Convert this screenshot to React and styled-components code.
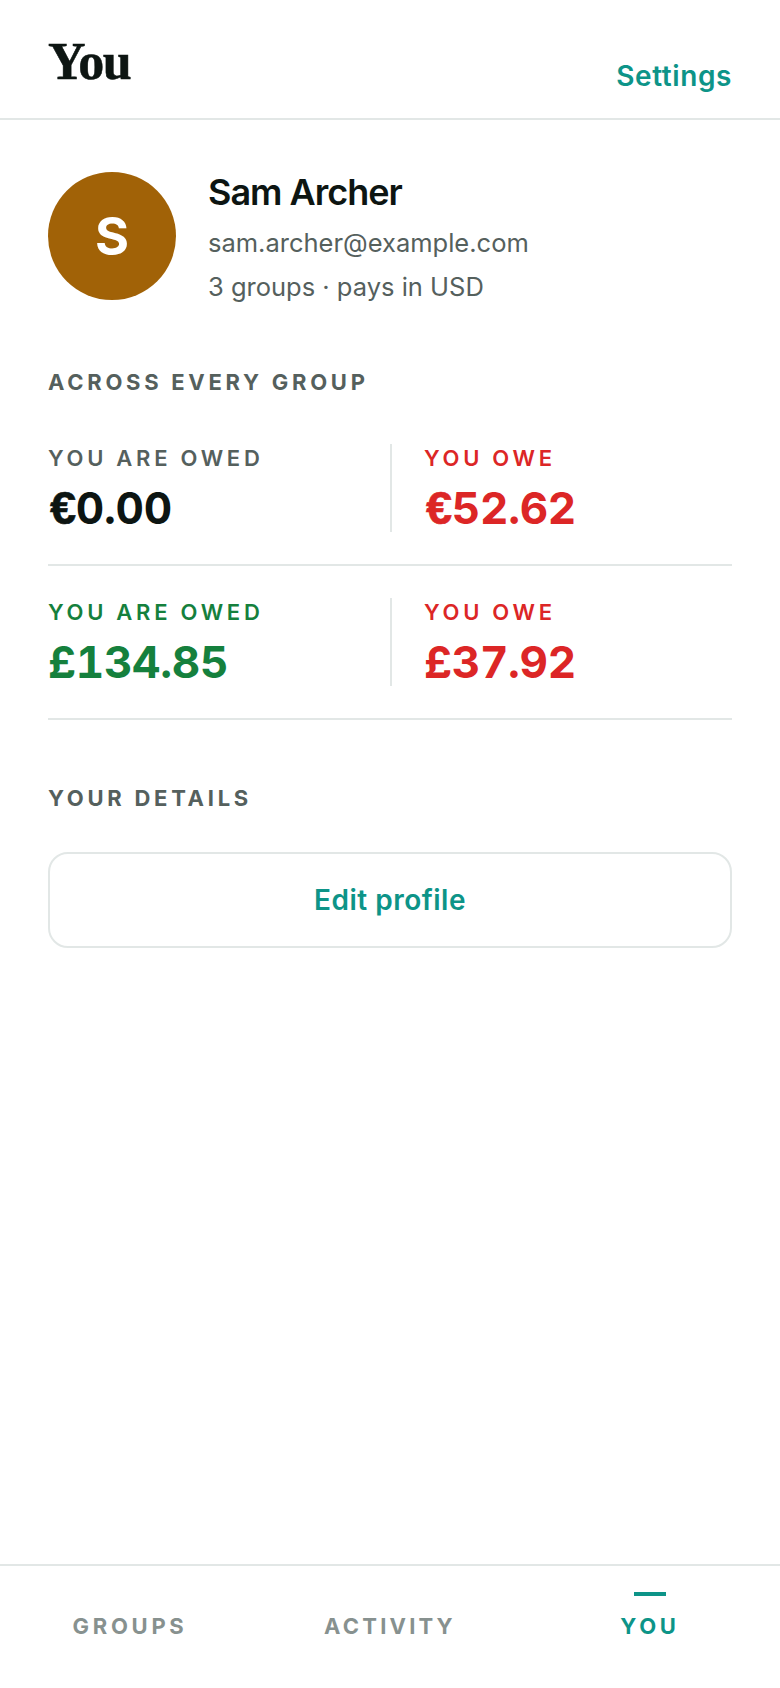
import React from "react";
import styled, { createGlobalStyle } from "styled-components";

const Global = createGlobalStyle`
  html, body { margin: 0; padding: 0; background: #fff; }
  body { font-family: Inter, "Liberation Sans", sans-serif; color: #0d1512; font-kerning: normal; }
`;

const Page = styled.div`
  width: 780px;
  height: 1688px;
  display: flex;
  flex-direction: column;
  overflow: hidden;
`;

const Header = styled.header`
  height: 120px;
  box-sizing: border-box;
  border-bottom: 2px solid #e2e7e6;
  padding: 0 48px 24px;
  display: flex;
  justify-content: space-between;
  align-items: flex-end;
`;

const Title = styled.h1`
  margin: 0 0 2px;
  font-family: "Liberation Serif", serif;
  font-weight: 700;
  font-size: 52px;
  line-height: 60px;
  letter-spacing: -1.5px;
  -webkit-text-stroke: 0.5px #0d1512;
`;

const HeaderLink = styled.a`
  margin-bottom: 1px;
  font-size: 28px;
  line-height: 34px;
  font-weight: 600;
  letter-spacing: 0.6px;
  color: #0d9488;
`;

const Main = styled.main`
  flex: 1;
  padding: 52px 48px 0;
`;

const Profile = styled.section`
  display: flex;
  gap: 32px;
`;

const Avatar = styled.div`
  width: 128px;
  height: 128px;
  border-radius: 50%;
  background: #a16207;
  color: #fff;
  font-size: 52px;
  font-weight: 700;
  display: flex;
  align-items: center;
  justify-content: center;
`;

const ProfileText = styled.div`
  display: flex;
  flex-direction: column;
`;

const Name = styled.div`
  margin-top: -2px;
  font-size: 36px;
  line-height: 44px;
  font-weight: 600;
  letter-spacing: -1px;
`;

const Meta = styled.div`
  font-size: 25.5px;
  line-height: 32px;
  color: #55605d;
  margin-top: ${(p) => p.$top}px;
`;

const SectionLabel = styled.h2`
  margin: ${(p) => p.$top}px 0 0;
  font-size: 22px;
  line-height: 28px;
  font-weight: 700;
  letter-spacing: 3.72px;
  color: #55605d;
`;

const Rows = styled.div`
  margin-top: 48px;
`;

const Row = styled.div`
  display: grid;
  grid-template-columns: 1fr 1fr;
  padding-bottom: 32px;
  margin-bottom: 32px;
  border-bottom: 2px solid #e2e7e6;
  &:last-child { margin-bottom: 0; }
`;

const Cell = styled.div`
  height: 88px;
  box-sizing: border-box;
  ${(p) => p.$right && `border-left: 2px solid #e2e7e6; padding-left: 32px;`}
`;

const colors = { neutral: "#55605d", ink: "#0d1512", red: "#dc2626", green: "#15803d" };

const StatLabel = styled.div`
  font-size: 22px;
  line-height: 28px;
  font-weight: 600;
  letter-spacing: 3.72px;
  color: ${(p) => colors[p.$tone]};
`;

const Amount = styled.div`
  margin-top: 12px;
  font-size: 44px;
  line-height: 48px;
  font-weight: 700;
  font-variant-numeric: tabular-nums;
  letter-spacing: -0.3px;
  color: ${(p) => colors[p.$tone]};
`;

const Euro = styled.span`
  margin-left: 2px;
  font-family: "Liberation Sans", sans-serif;
  font-size: 47px;
  -webkit-text-stroke: 0.6px currentColor;
`;

const EditButton = styled.button`
  display: block;
  width: 100%;
  height: 96px;
  margin-top: 40px;
  background: #fff;
  border: 2px solid #e2e7e6;
  border-radius: 20px;
  font: 600 28px Inter, sans-serif;
  letter-spacing: 0.5px;
  color: #0d9488;
`;

const TabBar = styled.nav`
  height: 124px;
  box-sizing: border-box;
  border-top: 2px solid #e2e7e6;
  display: grid;
  grid-template-columns: repeat(3, 1fr);
`;

const Tab = styled.div`
  position: relative;
  text-align: center;
  padding-top: 46px;
  font-size: 22px;
  line-height: 28px;
  font-weight: 700;
  letter-spacing: ${(p) => p.$spacing ?? 3.72}px;
  color: ${(p) => (p.$active ? "#0d9488" : "#87918f")};
  ${(p) => p.$active && `
    &::before {
      content: "";
      position: absolute;
      top: 26px;
      left: 50%;
      width: 32px;
      height: 4px;
      margin-left: -16px;
      background: #0d9488;
    }
  `}
`;

const Stat = ({ label, symbol, value, labelTone, valueTone, right }) => (
  <Cell $right={right}>
    <StatLabel $tone={labelTone}>{label}</StatLabel>
    <Amount $tone={valueTone}>
      {symbol === "€" ? <Euro>€</Euro> : symbol}
      {value}
    </Amount>
  </Cell>
);

export default function App() {
  return (
    <Page>
      <Global />
      <Header>
        <Title>You</Title>
        <HeaderLink>Settings</HeaderLink>
      </Header>
      <Main>
        <Profile>
          <Avatar>S</Avatar>
          <ProfileText>
            <Name>Sam Archer</Name>
            <Meta $top={13}>sam.archer@example.com</Meta>
            <Meta $top={12}>3 groups · pays in USD</Meta>
          </ProfileText>
        </Profile>
        <SectionLabel $top={65}>ACROSS EVERY GROUP</SectionLabel>
        <Rows>
          <Row>
            <Stat label="YOU ARE OWED" symbol="€" value="0.00" labelTone="neutral" valueTone="ink" />
            <Stat right label="YOU OWE" symbol="€" value="52.62" labelTone="red" valueTone="red" />
          </Row>
          <Row>
            <Stat label="YOU ARE OWED" symbol="£" value="134.85" labelTone="green" valueTone="green" />
            <Stat right label="YOU OWE" symbol="£" value="37.92" labelTone="red" valueTone="red" />
          </Row>
        </Rows>
        <SectionLabel $top={64}>YOUR DETAILS</SectionLabel>
        <EditButton>Edit profile</EditButton>
      </Main>
      <TabBar>
        <Tab>GROUPS</Tab>
        <Tab $spacing={3.2}>ACTIVITY</Tab>
        <Tab $active>YOU</Tab>
      </TabBar>
    </Page>
  );
}
